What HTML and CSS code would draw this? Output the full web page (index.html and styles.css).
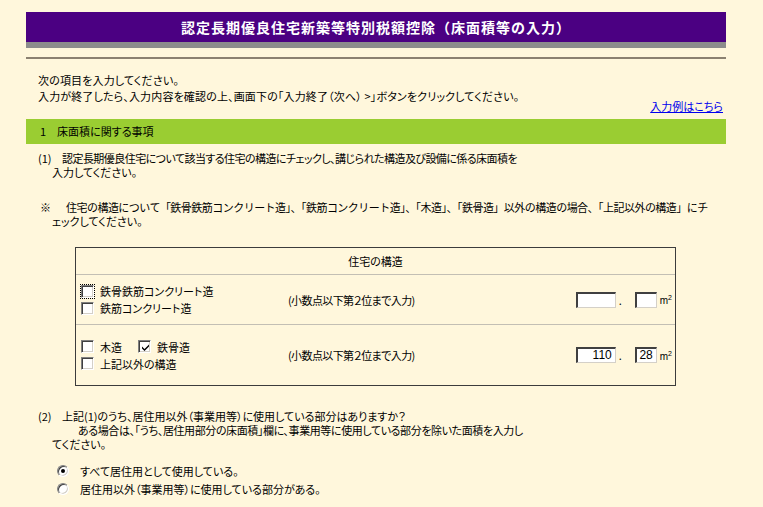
FILE: index.html
```html
<!DOCTYPE html>
<html lang="ja">
<head>
<meta charset="utf-8">
<title>認定長期優良住宅新築等特別税額控除（床面積等の入力）</title>
<link rel="stylesheet" href="styles.css">
</head>
<body>
<div class="page">
  <div class="titlebar">認定長期優良住宅新築等特別税額控除（床面積等の入力）</div>
  <div class="rule"></div>
  <div class="intro">次の項目を入力してください。<br>入力が終了したら、入力内容を確認の上、画面下の「入力終了（次へ） &gt;」ボタンをクリックしてください。</div>
  <div class="linkrow"><a href="#">入力例はこちら</a></div>
  <div class="section">1　床面積に関する事項</div>
  <p class="note n1"><span class="mk">(1)</span><span class="tight">認定長期優良住宅について該当する住宅の構造にチェックし、講じられた構造及び設備に係る床面積を</span><br>入力してください。</p>
  <p class="note n2"><span class="mk2">※</span><span class="wide">住宅の構造について「鉄骨鉄筋コンクリート造」、「鉄筋コンクリート造」、「木造」、「鉄骨造」以外の構造の場合、「上記以外の構造」にチ</span><br>ェックしてください。</p>

  <div class="struct">
    <div class="head">住宅の構造</div>
    <div class="row row1">
      <div class="checks">
        <div class="line"><span class="cb focus"></span><span class="lbl">鉄骨鉄筋コンクリート造</span></div>
        <div class="line"><span class="cb"></span><span class="lbl">鉄筋コンクリート造</span></div>
      </div>
      <div class="hint">(小数点以下第２位まで入力)</div>
      <div class="area">
        <span class="inp w40"></span><span class="dot">.</span><span class="inp w22"></span><span class="unit">m<sup>2</sup></span>
      </div>
    </div>
    <div class="row row2">
      <div class="checks">
        <div class="line"><span class="cb"></span><span class="lbl">木造</span><span class="cb on gap"><svg viewBox="0 0 9 9" width="9" height="9"><path d="M1 3.5 L3.5 6 L8 1.5 L8 3.5 L3.5 8 L1 5.5 Z" fill="#000"/></svg></span><span class="lbl">鉄骨造</span></div>
        <div class="line"><span class="cb"></span><span class="lbl">上記以外の構造</span></div>
      </div>
      <div class="hint">(小数点以下第２位まで入力)</div>
      <div class="area">
        <span class="inp w40">110</span><span class="dot">.</span><span class="inp w22">28</span><span class="unit">m<sup>2</sup></span>
      </div>
    </div>
  </div>

  <p class="note n3"><span class="mk">(2)</span>上記(1)のうち、居住用以外（事業用等）に使用している部分はありますか？<br><span class="ind"></span><span class="tight2">ある場合は、「うち、居住用部分の床面積」欄に、事業用等に使用している部分を除いた面積を入力し</span><br>てください。</p>

  <div class="radios">
    <div class="rline"><span class="rb on"></span><span class="lbl">すべて居住用として使用している。</span></div>
    <div class="rline"><span class="rb"></span><span class="lbl">居住用以外（事業用等）に使用している部分がある。</span></div>
  </div>
</div>
</body>
</html>
```

FILE: styles.css
```css
html, body {
  margin: 0;
  padding: 0;
  background: #fff7dc;
}
body {
  font-family: "Noto Sans CJK JP", "Noto Sans", sans-serif;
  font-size: 11px;
  color: #000;
  font-feature-settings: "palt";
}
.page {
  width: 700px;
  padding: 12px 0 0 26px;
}
.titlebar {
  background: #4b0082;
  height: 30px;
  line-height: 30px;
  border-bottom: 6px solid #8c8c8c;
  color: #fff;
  font-weight: bold;
  font-size: 14px;
  letter-spacing: 1px;
  text-align: center;
  font-feature-settings: normal;
}
.rule {
  margin-top: 9px;
  height: 2px;
  background: #8b8170;
}
.intro {
  margin-top: 13px;
  padding-left: 12px;
  line-height: 16px;
  white-space: nowrap;
  letter-spacing: 0.15px;
}
.linkrow {
  margin-top: -5px;
  line-height: 14px;
  text-align: right;
  padding-right: 3px;
}
.linkrow a {
  color: #0000ee;
  text-decoration: underline;
}
.section {
  margin-top: 6px;
  height: 25px;
  line-height: 25px;
  background: #9acd32;
  padding-left: 14px;
}
.note {
  margin: 0;
  line-height: 14px;
  white-space: nowrap;
  padding-left: 26px;
}
.mk {
  display: inline-block;
  width: 24px;
  margin-left: -14px;
}
.mk2 {
  display: inline-block;
  width: 26px;
  margin-left: -12px;
}
.ind {
  display: inline-block;
  width: 26px;
}
.tight { letter-spacing: -0.55px; }
.tight2 { letter-spacing: -0.4px; }
.wide {
  font-feature-settings: normal;
  letter-spacing: -0.53px;
}
.n1 { margin-top: 7px; }
.n2 { margin-top: 21px; }
.n3 { margin-top: 23px; }

.struct {
  margin: 19px 0 0 49px;
  width: 599px;
  border: 1px solid #3c3c3c;
}
.head {
  height: 26px;
  line-height: 26px;
  text-align: center;
  border-bottom: 1px solid #c3bfb4;
}
.row {
  display: grid;
  grid-template-columns: 206px 1fr auto;
  align-items: center;
  padding: 0 3px 0 5px;
}
.row1 {
  height: 49px;
  border-bottom: 1px solid #c3bfb4;
}
.row2 {
  height: 60px;
}
.line {
  display: flex;
  align-items: center;
  height: 17px;
}
.lbl {
  margin-left: 6px;
}
.cb {
  display: inline-flex;
  align-items: center;
  justify-content: center;
  box-sizing: border-box;
  width: 13px;
  height: 13px;
  background: #fff;
  border-top: 1px solid #808080;
  border-left: 1px solid #808080;
  border-right: 1px solid #fff;
  border-bottom: 1px solid #fff;
  box-shadow: inset 1px 1px 0 #404040, inset -1px -1px 0 #d4d0c8;
}
.cb.gap { margin-left: 16px; }
.cb svg { display: block; margin: 1px 0 0 1px; }
.cb.focus {
  outline: 1px dotted #000;
  outline-offset: 0px;
}
.hint {
  padding-left: 1px;
  letter-spacing: -0.6px;
}
.area {
  display: flex;
  align-items: center;
}
.inp {
  box-sizing: border-box;
  display: inline-block;
  height: 16px;
  line-height: 13px;
  background: #fff;
  border-style: solid;
  border-width: 2px 1px 1px 2px;
  border-color: #404040 #d4d0c8 #d4d0c8 #404040;
  text-align: right;
  padding-right: 3px;
  font-family: "Liberation Sans", Arial, sans-serif;
  font-size: 12px;
}
.w40 { width: 40px; }
.w22 { width: 22px; }
.dot {
  width: 19px;
  padding-left: 3px;
  box-sizing: border-box;
  font-size: 11px;
  line-height: 16px;
}
.unit {
  margin-left: 3px;
  font-family: "Liberation Sans", Arial, sans-serif;
  font-size: 10px;
  line-height: 12px;
}
.unit sup {
  font-size: 7px;
  vertical-align: 4px;
}
.radios {
  margin-top: 11px;
  padding-left: 31px;
}
.rline {
  display: flex;
  align-items: center;
  height: 18px;
}
.rline .lbl {
  margin-left: 11px;
}
.rb {
  position: relative;
  box-sizing: border-box;
  width: 12px;
  height: 12px;
  border-radius: 50%;
  background: #fff;
  border-top: 1px solid #808080;
  border-left: 1px solid #808080;
  border-right: 1px solid #fff;
  border-bottom: 1px solid #fff;
  box-shadow: inset 1px 1px 0 #404040, inset -1px -1px 0 #d4d0c8;
}
.rb.on::after {
  content: "";
  position: absolute;
  left: 3px;
  top: 3px;
  width: 4px;
  height: 4px;
  border-radius: 50%;
  background: #000;
}
```
